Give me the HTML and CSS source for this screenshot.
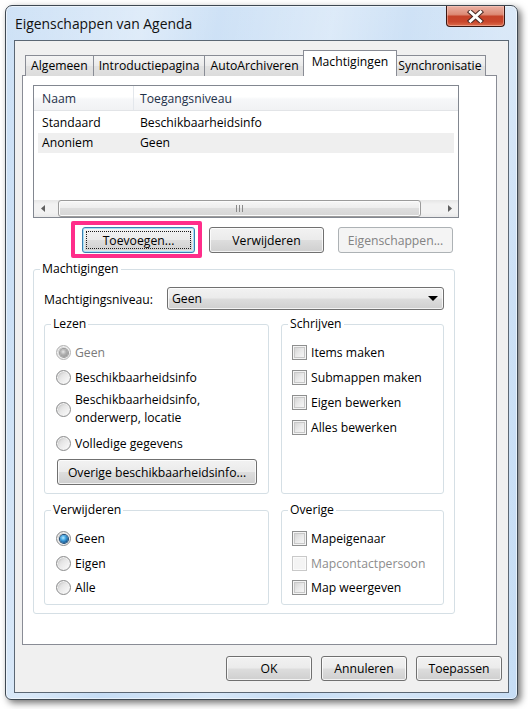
FILE: index.html
```html
<!DOCTYPE html>
<html lang="nl">
<head>
<meta charset="utf-8">
<title>Eigenschappen van Agenda</title>
<link rel="stylesheet" href="styles.css">
</head>
<body>
<div class="window">
  <div class="titlebar">
    <span class="title">Eigenschappen van Agenda</span>
    <div class="close" aria-label="Sluiten">
      <svg width="17" height="13" viewBox="0 0 17 13">
        <path d="M3.5 2 L13.5 11 M13.5 2 L3.5 11" stroke="#4b2a25" stroke-width="5" stroke-linecap="square"/>
        <path d="M3.5 2 L13.5 11 M13.5 2 L3.5 11" stroke="#ffffff" stroke-width="3" stroke-linecap="square"/>
      </svg>
    </div>
  </div>
  <div class="client">
    <div class="tabs">
      <div class="tab">Algemeen</div>
      <div class="tab">Introductiepagina</div>
      <div class="tab">AutoArchiveren</div>
      <div class="tab active">Machtigingen</div>
      <div class="tab last">Synchronisatie</div>
    </div>
    <div class="panel">
      <div class="list">
        <div class="list-head">
          <div class="hcol1">Naam</div>
          <div class="hcol2">Toegangsniveau</div>
        </div>
        <div class="row first">
          <div class="col1">Standaard</div>
          <div class="col2">Beschikbaarheidsinfo</div>
        </div>
        <div class="row sel">
          <div class="col1">Anoniem</div>
          <div class="col2">Geen</div>
        </div>
        <div class="list-fill"></div>
        <div class="hscroll">
          <div class="sarrow">
            <svg width="4" height="7" viewBox="0 0 4 7"><path d="M4 0 L0 3.5 L4 7 Z" fill="#606060"/></svg>
          </div>
          <div class="track">
            <div class="thumb">
              <svg width="7" height="7" viewBox="0 0 7 7">
                <path d="M0.5 0 V7 M3.5 0 V7 M6.5 0 V7" stroke="#8a8a8a" stroke-width="1"/>
              </svg>
            </div>
          </div>
          <div class="sarrow">
            <svg width="4" height="7" viewBox="0 0 4 7"><path d="M0 0 L4 3.5 L0 7 Z" fill="#606060"/></svg>
          </div>
        </div>
      </div>

      <div class="btnrow">
        <button class="btn wide default"><span class="focus">Toevoegen...</span></button>
        <button class="btn wide2">Verwijderen</button>
        <button class="btn wide2" disabled>Eigenschappen...</button>
        <div class="highlight"></div>
      </div>

      <fieldset class="group main">
        <legend>Machtigingen</legend>
        <div class="levelrow">
          <span class="levellabel">Machtigingsniveau:</span>
          <div class="combo"><span>Geen</span><span class="caret"></span></div>
        </div>
        <div class="cols">
          <fieldset class="group">
            <legend>Lezen</legend>
            <div class="opt disabled"><span class="radio on off"></span><span>Geen</span></div>
            <div class="opt"><span class="radio"></span><span>Beschikbaarheidsinfo</span></div>
            <div class="opt two"><span class="radio"></span><span>Beschikbaarheidsinfo,<br>onderwerp, locatie</span></div>
            <div class="opt"><span class="radio"></span><span>Volledige gegevens</span></div>
            <button class="btn other">Overige beschikbaarheidsinfo...</button>
          </fieldset>
          <fieldset class="group">
            <legend>Schrijven</legend>
            <div class="opt"><span class="check"></span><span>Items maken</span></div>
            <div class="opt"><span class="check"></span><span>Submappen maken</span></div>
            <div class="opt"><span class="check"></span><span>Eigen bewerken</span></div>
            <div class="opt"><span class="check"></span><span>Alles bewerken</span></div>
          </fieldset>
          <fieldset class="group tight">
            <legend>Verwijderen</legend>
            <div class="opt"><span class="radio on"></span><span>Geen</span></div>
            <div class="opt"><span class="radio"></span><span>Eigen</span></div>
            <div class="opt"><span class="radio"></span><span>Alle</span></div>
          </fieldset>
          <fieldset class="group tight">
            <legend>Overige</legend>
            <div class="opt"><span class="check"></span><span>Mapeigenaar</span></div>
            <div class="opt disabled2"><span class="check dis"></span><span>Mapcontactpersoon</span></div>
            <div class="opt"><span class="check"></span><span>Map weergeven</span></div>
          </fieldset>
        </div>
      </fieldset>
    </div>
    <div class="footer">
      <button class="btn foot">OK</button>
      <button class="btn foot">Annuleren</button>
      <button class="btn foot">Toepassen</button>
    </div>
  </div>
</div>
</body>
</html>
```

FILE: styles.css
```css
html, body {
  margin: 0;
  padding: 0;
}
body {
  width: 528px;
  height: 709px;
  overflow: hidden;
  background: #ffffff;
  font-family: "Segoe UI", "Open Sans", "Noto Sans", sans-serif;
  font-size: 12.2px;
  line-height: 17px;
  color: #000;
}

.window {
  margin: 5px 0 0 5px;
  width: 513px;
  height: 695px;
  box-sizing: border-box;
  border: 1px solid #3e4852;
  border-radius: 7px 7px 6px 6px;
  background:
    linear-gradient(100deg, rgba(255,255,255,0) 0%, rgba(255,255,255,0.35) 22%, rgba(255,255,255,0) 34%, rgba(255,255,255,0.3) 52%, rgba(255,255,255,0) 64%, rgba(255,255,255,0.25) 80%, rgba(255,255,255,0) 100%),
    linear-gradient(#cfe2f6, #c3dbf4 40%, #c6ddf5);
  box-shadow: 3px 3px 7px rgba(0,0,0,0.55), inset 0 0 0 1px rgba(255,255,255,0.55);
  display: flex;
  flex-direction: column;
  padding: 0 8px 6px 8px;
}

.titlebar {
  height: 34px;
  display: flex;
  align-items: flex-start;
}
.title {
  margin: 8px 0 0 1px;
  font-size: 13.9px;
  line-height: 20px;
  color: #111;
}
.close {
  margin-left: auto;
  margin-right: 4px;
  width: 59px;
  height: 21px;
  box-sizing: border-box;
  border: 1px solid #3b1712;
  border-top: none;
  border-radius: 0 0 4px 4px;
  background: linear-gradient(#eab1a4 0%, #dd8b76 42%, #c5432a 52%, #c9462c 78%, #dc6d4c 100%);
  box-shadow: inset 0 0 0 1px rgba(255,210,200,0.45);
  display: flex;
  align-items: center;
  justify-content: center;
}

.client {
  flex: 1;
  border: 1px solid #5b6774;
  background: #f0f0f0;
  padding: 10px 6px 0 7px;
  display: flex;
  flex-direction: column;
}

.tabs {
  display: flex;
  align-items: flex-end;
  height: 25px;
  padding-left: 3px;
  margin-bottom: -1px;
  position: relative;
  z-index: 1;
}
.tab {
  height: 21px;
  box-sizing: border-box;
  border: 1px solid #898c95;
  border-bottom: none;
  padding: 0 5px;
  line-height: 20px;
  background: linear-gradient(#f5f5f5, #eaeaea 50%, #e2e2e2 50%, #dcdcdc);
  white-space: nowrap;
}
.tab + .tab {
  margin-left: -1px;
}
.tab.active {
  height: 26px;
  background: #ffffff;
  line-height: 22px;
  margin: 0 -2px 0 -2px;
  padding: 0 8px;
  position: relative;
  z-index: 2;
}
.tab.last {
  padding: 0 3px 0 3px;
}

.panel {
  width: 475px;
  height: 570px;
  box-sizing: border-box;
  border: 1px solid #898c95;
  background: #ffffff;
  padding: 9px 0 0 10px;
}

.list {
  width: 426px;
  height: 133px;
  box-sizing: border-box;
  border: 1px solid #828790;
  display: flex;
  flex-direction: column;
  background: #fff;
}
.list-head {
  height: 24px;
  border-bottom: 1px solid #e2e4e7;
  display: flex;
  background: linear-gradient(#ffffff, #ffffff 45%, #f6f7f9 55%, #f1f2f4);
  color: #1f3149;
  line-height: 25px;
}
.hcol1 {
  width: 91px;
  padding-left: 8px;
  border-right: 1px solid #e3e7ec;
}
.hcol2 {
  padding-left: 6px;
}
.row {
  height: 20px;
  line-height: 20px;
  margin: 0 4px;
  padding-left: 4px;
  display: flex;
}
.row.first {
  margin-top: 2px;
}
.row.sel {
  background: #efefef;
}
.col1 {
  width: 91px;
}
.col2 {
  padding-left: 7px;
}
.list-fill {
  flex: 1;
}
.hscroll {
  height: 17px;
  display: flex;
  background: linear-gradient(#e6e6e6, #f2f2f2 25%, #f2f2f2 75%, #e9e9e9);
}
.sarrow {
  width: 17px;
  display: flex;
  align-items: center;
  justify-content: center;
}
.track {
  flex: 1;
  padding-left: 7px;
  display: flex;
}
.thumb {
  width: 363px;
  box-sizing: border-box;
  border: 1px solid #9b9b9b;
  border-radius: 3px;
  background: linear-gradient(#f7f7f7, #ececec 50%, #dedede 50%, #d6d6d6);
  box-shadow: inset 0 0 0 1px #fbfbfb;
  display: flex;
  align-items: center;
  justify-content: center;
}

.btnrow {
  margin-top: 9px;
  height: 26px;
  display: flex;
  gap: 14px;
  padding-left: 49px;
  position: relative;
}
.btn {
  font: inherit;
  color: #000;
  box-sizing: border-box;
  height: 26px;
  padding: 0;
  border: 1px solid #707070;
  border-radius: 3px;
  background: linear-gradient(#f2f2f2 0%, #ebebeb 48%, #dddddd 52%, #cfcfcf 100%);
  box-shadow: inset 0 0 0 1px rgba(255,255,255,0.75);
  display: flex;
  align-items: center;
  justify-content: center;
}
.btn.wide { width: 113px; }
.btn.wide2 { width: 115px; }
.btn.default {
  border-color: #3c7fb1;
  box-shadow: inset 0 0 0 1px #a6e3f8, inset 0 0 0 2px rgba(255,255,255,0.4);
  padding: 3px;
}
.focus {
  flex: 1;
  align-self: stretch;
  border: 1px dotted #1a1a1a;
  display: flex;
  align-items: center;
  justify-content: center;
}
.btn:disabled {
  border-color: #adb2b5;
  background: #f4f4f4;
  box-shadow: none;
  color: #838383;
}
.highlight {
  position: absolute;
  left: 38px;
  top: -6px;
  width: 131px;
  height: 37px;
  box-sizing: border-box;
  border: 4px solid #ff2d8a;
  border-radius: 2px;
}

.group {
  margin: 0;
  min-width: 0;
  border: 1px solid #d5dfe5;
  border-radius: 3px;
  padding: 12px 10px 8px 10px;
}
.group legend {
  padding: 0 2px;
  margin-left: -4px;
  line-height: 16px;
}
.group.main {
  width: 422px;
  box-sizing: border-box;
  margin-top: 8px;
  padding: 10px 10px 8px 10px;
}
.levelrow {
  display: flex;
  align-items: center;
  justify-content: space-between;
  height: 23px;
}
.levellabel {
  margin-top: 2px;
}
.combo {
  width: 277px;
  height: 23px;
  box-sizing: border-box;
  border: 1px solid #707070;
  border-radius: 3px;
  background: linear-gradient(#f2f2f2 0%, #ebebeb 48%, #dddddd 52%, #cfcfcf 100%);
  box-shadow: inset 0 0 0 1px rgba(255,255,255,0.75);
  display: flex;
  align-items: center;
  justify-content: space-between;
  padding: 0 5px 0 4px;
}
.caret {
  width: 0;
  height: 0;
  border-left: 5px solid transparent;
  border-right: 5px solid transparent;
  border-top: 5px solid #000;
}

.cols {
  margin-top: 6px;
  display: grid;
  grid-template-columns: 225px 163px;
  column-gap: 12px;
  row-gap: 8px;
}

.opt {
  display: flex;
  align-items: center;
  height: 17px;
  white-space: nowrap;
}
.opt + .opt {
  margin-top: 8px;
}
.opt.two {
  height: auto;
  line-height: 18px;
  margin-top: 5px;
}
.tight .opt + .opt {
  margin-top: 7.5px;
}
.disabled { color: #7b7b7b; }
.disabled2 { color: #8d8d8d; }

.radio {
  flex: none;
  width: 15px;
  height: 15px;
  box-sizing: border-box;
  margin: 0 4px 0 1px;
  border-radius: 50%;
  border: 1px solid #8b8c8d;
  background: linear-gradient(135deg, #cfcfcf 0%, #e8e8e8 45%, #fdfdfd 100%);
  box-shadow: inset 0 0 0 1px #f3f3f3, inset 1px 1px 2px rgba(0,0,0,0.12);
  display: flex;
  align-items: center;
  justify-content: center;
}
.radio.on::before {
  content: "";
  width: 8px;
  height: 8px;
  border-radius: 50%;
  background: radial-gradient(circle at 40% 35%, #b8ecff 0%, #44a6e4 35%, #14558f 75%, #0d3b66 100%);
  box-shadow: 0 0 0 1px #1c4a75;
}
.radio.off {
  border-color: #b3b3b3;
}
.radio.off::before {
  background: radial-gradient(circle at 40% 35%, #e6e6e6 0%, #b0b0b0 40%, #8a8a8a 100%);
  box-shadow: 0 0 0 1px #9a9a9a;
}

.check {
  flex: none;
  width: 15px;
  height: 15px;
  box-sizing: border-box;
  margin-right: 4px;
  border: 1px solid #8e8f8f;
  background: linear-gradient(135deg, #cdcdcd 0%, #e9e9e9 50%, #fbfbfb 100%);
  box-shadow: inset 0 0 0 1px #f4f4f4, inset 0 0 0 2px #c8c8c8;
}
.check.dis {
  border-color: #c9c9c9;
  background: #f4f4f4;
  box-shadow: inset 0 0 0 1px #fbfbfb;
}

.btn.other {
  width: 200px;
  margin: 7px 0 0 2px;
}

.footer {
  display: flex;
  justify-content: flex-end;
  gap: 9px;
  padding-top: 11px;
}
.btn.foot {
  width: 86px;
  height: 25px;
}
```
